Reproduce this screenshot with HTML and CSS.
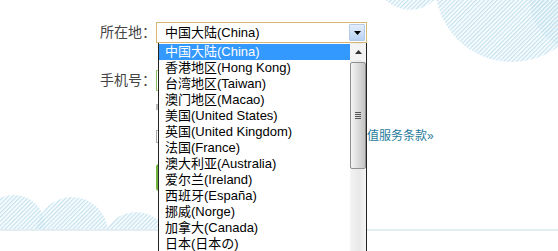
FILE: index.html
```html
<!DOCTYPE html>
<html lang="zh-CN">
<head>
<meta charset="utf-8">
<title>注册</title>
<link rel="stylesheet" href="styles.css">
</head>
<body>
<svg class="bg" width="558" height="251" viewBox="0 0 558 251" aria-hidden="true">
  <defs>
    <pattern id="hatch" width="3" height="3" patternUnits="userSpaceOnUse" patternTransform="rotate(45)">
      <rect width="1.4" height="3" fill="#c6e3f0"/>
    </pattern>
    <clipPath id="ground"><rect x="0" y="0" width="558" height="229"/></clipPath>
  </defs>
  <g fill="url(#hatch)">
    <circle cx="410" cy="-25" r="35"/>
    <circle cx="512" cy="-15" r="77"/>
    <circle cx="580" cy="0" r="50"/>
  </g>
  <g fill="url(#hatch)" clip-path="url(#ground)">
    <circle cx="14" cy="226" r="31"/>
    <circle cx="72" cy="233" r="36"/>
    <circle cx="136" cy="246" r="34"/>
  </g>
  <rect x="0" y="229" width="558" height="2" fill="#e3eef3"/>
</svg>

<form class="reg">
  <div class="row">
    <label class="lbl">所在地：</label>
    <div class="select">
      <span class="value">中国大陆(China)</span>
      <span class="arrow-btn">
        <svg width="7" height="4" viewBox="0 0 7 4"><path d="M0 0H7L3.5 4Z" fill="#000"/></svg>
      </span>
    </div>
  </div>
  <div class="row row-phone">
    <label class="lbl">手机号：</label>
    <input class="phone" type="text">
  </div>
  <div class="hint"><span class="hint-mark"></span></div>
  <div class="agree">
    <span class="cb"></span>
    <a class="terms">值服务条款»</a>
  </div>
  <div class="actions"><span class="submit"></span></div>
</form>

<div class="dropdown">
  <ul class="options">
    <li class="sel">中国大陆(China)</li>
    <li>香港地区(Hong Kong)</li>
    <li>台湾地区(Taiwan)</li>
    <li>澳门地区(Macao)</li>
    <li>美国(United States)</li>
    <li>英国(United Kingdom)</li>
    <li>法国(France)</li>
    <li>澳大利亚(Australia)</li>
    <li>爱尔兰(Ireland)</li>
    <li>西班牙(España)</li>
    <li>挪威(Norge)</li>
    <li>加拿大(Canada)</li>
    <li>日本(日本の)</li>
  </ul>
  <div class="scrollbar">
    <span class="sb-up">
      <svg width="7" height="4" viewBox="0 0 7 4"><path d="M0 4H7L3.5 0Z" fill="#333"/></svg>
    </span>
    <span class="sb-thumb"><span class="grip"></span></span>
  </div>
</div>
</body>
</html>
```

FILE: styles.css
```css
html, body {
  margin: 0;
  padding: 0;
}
body {
  width: 558px;
  height: 251px;
  overflow: hidden;
  position: relative;
  background: #fff;
  font-family: "Liberation Sans", "Noto Sans CJK SC", sans-serif;
}
.bg {
  position: absolute;
  left: 0;
  top: 0;
  z-index: 0;
}
.reg {
  position: relative;
  z-index: 1;
  margin: 0;
  padding: 22px 0 0 100px;
  display: flex;
  flex-direction: column;
}
.row {
  display: flex;
  align-items: center;
  height: 21px;
}
.lbl {
  width: 56px;
  font-size: 14px;
  color: #444;
  line-height: 21px;
  white-space: nowrap;
}
.select {
  width: 211px;
  height: 21px;
  box-sizing: border-box;
  border: 1px solid #d6b874;
  background: #fff;
  display: flex;
  align-items: center;
  justify-content: space-between;
  padding: 0 1px 0 8px;
}
.value {
  font-size: 13px;
  color: #000;
  line-height: 16px;
}
.arrow-btn {
  width: 16px;
  height: 17px;
  box-sizing: border-box;
  border: 1px solid #b3cbe9;
  border-radius: 1px;
  background: linear-gradient(#e4eefb, #b9d1f1);
  display: flex;
  align-items: center;
  justify-content: center;
}
.row-phone {
  margin-top: 27px;
}
.phone {
  width: 180px;
  height: 21px;
  box-sizing: border-box;
  border: 1px solid #a8d08a;
  border-left-color: #8cc05e;
  margin: 0;
  padding: 0;
}
.hint {
  margin: 9px 0 0 56px;
  height: 14px;
  display: flex;
  align-items: center;
}
.hint-mark {
  width: 3px;
  height: 6px;
  background: #bbb;
}
.agree {
  margin: 15px 0 0 56px;
  display: flex;
  align-items: center;
  height: 14px;
}
.cb {
  width: 11px;
  height: 11px;
  border: 1px solid #aaa;
  background: #fff;
}
.terms {
  margin-left: 198px;
  font-size: 12px;
  line-height: 14px;
  color: #1f7b9a;
  white-space: nowrap;
}
.actions {
  margin: 21px 0 0 56px;
}
.submit {
  display: block;
  width: 110px;
  height: 27px;
  border-radius: 3px;
  background: #71b53f;
}
.dropdown {
  position: absolute;
  z-index: 2;
  left: 158px;
  top: 43px;
  width: 209px;
  height: 208px;
  box-sizing: border-box;
  border: 1px solid #222;
  border-top: 0;
  border-bottom: 0;
  background: #fff;
  display: grid;
  grid-template-columns: 1fr 16px;
  overflow: hidden;
}
.options {
  list-style: none;
  margin: 0;
  padding: 1px 0 0;
}
.options li {
  height: 16px;
  line-height: 16px;
  font-size: 13px;
  color: #000;
  padding-left: 6px;
  white-space: nowrap;
}
.options li.sel {
  background: #3399ff;
  color: #fff;
}
.scrollbar {
  background: linear-gradient(90deg, #f3f3f3, #e9e9e9 60%, #f5f5f5);
  display: flex;
  flex-direction: column;
  align-items: stretch;
  padding-top: 1px;
}
.sb-up {
  height: 16px;
  display: flex;
  align-items: center;
  justify-content: center;
  background: #f4f4f4;
}
.sb-thumb {
  margin-top: 2px;
  height: 107px;
  box-sizing: border-box;
  border: 1px solid #8f8f8f;
  border-radius: 2px;
  background: linear-gradient(90deg, #f4f4f4, #dcdcdc 50%, #c4c4c4);
  display: flex;
  align-items: center;
  justify-content: center;
}
.grip {
  width: 6px;
  height: 7px;
  background: repeating-linear-gradient(#555 0 1px, transparent 1px 2px);
}
```
